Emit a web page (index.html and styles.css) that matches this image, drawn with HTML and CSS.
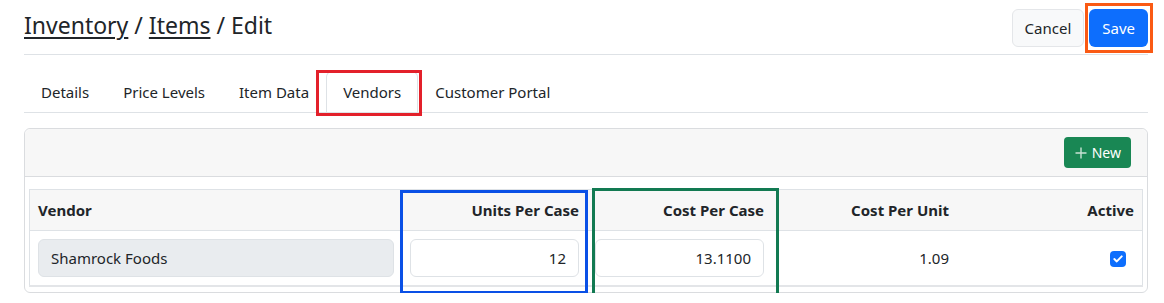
FILE: index.html
```html
<!DOCTYPE html>
<html>
<head>
<title>Edit Item</title>
<link rel="stylesheet" href="styles.css">
</head>
<body>

<div class="page">
    <div class="page-head">
        <h1 class="crumbs"><a href="#">Inventory</a> / <a href="#">Items</a> / Edit</h1>
        <div class="actions">
            <button class="btn btn-light">Cancel</button>
            <button class="btn btn-primary">Save</button>
        </div>
    </div>

    <ul class="tabs">
        <li class="tab">Details</li>
        <li class="tab">Price Levels</li>
        <li class="tab">Item Data</li>
        <li class="tab active">Vendors</li>
        <li class="tab">Customer Portal</li>
    </ul>

    <div class="card">
        <div class="card-header">
            <button class="btn btn-success btn-sm">
                <svg class="plus" width="12" height="12" viewBox="0 0 12 12"><path d="M6 0.5 V11.5 M0.5 6 H11.5" stroke="#c9e2d4" stroke-width="1.4" fill="none"/></svg>
                New
            </button>
        </div>
        <div class="card-body">
            <table class="grid">
                <thead>
                    <tr>
                        <th class="left">Vendor</th>
                        <th class="num">Units Per Case</th>
                        <th class="num">Cost Per Case</th>
                        <th class="num">Cost Per Unit</th>
                        <th class="num">Active</th>
                    </tr>
                </thead>
                <tbody>
                    <tr>
                        <td><input class="field" type="text" value="Shamrock Foods" disabled></td>
                        <td><input class="field num" type="text" value="12"></td>
                        <td><input class="field num" type="text" value="13.1100"></td>
                        <td class="num">1.09</td>
                        <td class="num"><span class="check"><svg width="10" height="8" viewBox="0 0 10 8"><path d="M1.3 4.1 L3.8 6.4 L8.7 1.4" fill="none" stroke="#fff" stroke-width="2" stroke-linecap="round" stroke-linejoin="round"/></svg></span></td>
                    </tr>
                </tbody>
            </table>
        </div>
    </div>

    <!-- review marks -->
    <div class="mark mark-save"></div>
    <div class="mark mark-tab"></div>
    <div class="mark mark-units"></div>
    <div class="mark mark-cost"></div>
</div>

</body>
</html>
```

FILE: styles.css
```css
body {
    margin: 0;
    background-color: #fff;
    color: #212529;
    font-family: "Noto Sans", "Open Sans", Arial, sans-serif;
    font-size: 15px;
    line-height: 24px;
}
.page {
    position: relative;
    padding: 9px 16px 0 24px;
}
.page-head {
    display: flex;
    justify-content: space-between;
    align-items: flex-start;
    border-bottom: 1px solid #dee2e6;
    padding-bottom: 7px;
}
.crumbs {
    margin: 0;
    font-size: 23px;
    font-weight: 400;
    line-height: 32px;
}
.crumbs a {
    color: #212529;
    text-decoration: underline;
    text-underline-offset: 3px;
    text-decoration-thickness: 2px;
}
.actions {
    display: flex;
    gap: 5px;
}
.btn {
    font-family: inherit;
    font-size: 15px;
    line-height: 24px;
    padding: 6px 12px;
    border: 1px solid transparent;
    border-radius: 6px;
}
.btn-light {
    background-color: #f8f9fa;
    border-color: #e4e6e9;
    color: #212529;
}
.btn-primary {
    background-color: #0d6efd;
    color: #fff;
}
.btn-success {
    display: flex;
    align-items: center;
    gap: 5px;
    background-color: #198754;
    color: #fff;
}
.btn-sm {
    font-size: 14px;
    line-height: 21px;
    padding: 4px 9px 4px 10px;
    border-radius: 4px;
}
.tabs {
    list-style: none;
    display: flex;
    margin: 16px 0 0;
    padding: 0;
    border-bottom: 1px solid #dee2e6;
}
.tab {
    padding: 8px 16px;
    border: 1px solid transparent;
    border-bottom: none;
}
.tab.active {
    border-color: #dee2e6;
    border-top-left-radius: 6px;
    border-top-right-radius: 6px;
    background-color: #fff;
}
.card {
    margin-top: 15px;
    border: 1px solid #dadcdf;
    border-radius: 6px;
}
.card-header {
    display: flex;
    justify-content: flex-end;
    padding: 8px 16px;
    background-color: #f7f7f7;
    border-bottom: 1px solid #dadcdf;
    border-radius: 6px 6px 0 0;
}
.card-body {
    padding: 12px 4px 5px;
}
.grid {
    width: 100%;
    table-layout: fixed;
    border-collapse: collapse;
    border: 1px solid #dee2e6;
    border-bottom: 2px solid #e3e5e8;
}
.grid th {
    background-color: #f7f7f7;
    font-weight: 700;
    padding: 8px;
    border-bottom: 1px solid #dee2e6;
}
.grid td {
    padding: 8px;
}
.grid th.num {
    width: 169px;
}
.grid th.num, .grid td.num {
    text-align: right;
}
.grid th.left {
    text-align: left;
}
.field {
    box-sizing: border-box;
    width: 100%;
    height: 38px;
    padding: 6px 12px;
    border: 1px solid #dee2e6;
    border-radius: 6px;
    font-family: inherit;
    font-size: 15px;
    color: #212529;
    background-color: #fff;
}
.field:disabled {
    background-color: #e9ecef;
}
.field.num {
    text-align: right;
}
.check {
    display: inline-flex;
    align-items: center;
    justify-content: center;
    width: 16px;
    height: 16px;
    border-radius: 4px;
    background-color: #0d6efd;
    vertical-align: 1px;
    margin-right: 8px;
}
.mark {
    position: absolute;
    border: 3px solid;
    box-sizing: border-box;
}
.mark-save {
    left: 1085px;
    top: 3px;
    width: 68px;
    height: 50px;
    border-color: #fa5a14;
}
.mark-tab {
    left: 316px;
    top: 70px;
    width: 106px;
    height: 46px;
    border-color: #e3202a;
}
.mark-units {
    left: 400px;
    top: 190px;
    width: 188px;
    height: 104px;
    border-color: #0a50e6;
}
.mark-cost {
    left: 592px;
    top: 188px;
    width: 187px;
    height: 108px;
    border-color: #127a52;
}
```
